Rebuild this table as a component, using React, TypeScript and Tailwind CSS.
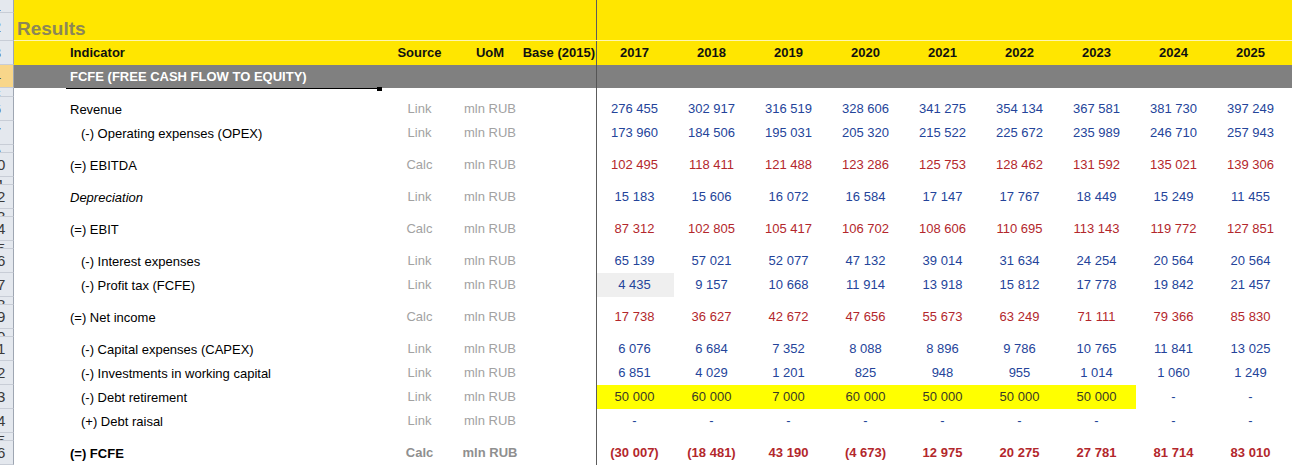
import React from "react";

type DataRow = {
  kind: "data";
  num: number;
  label: string;
  indent?: boolean;
  italic?: boolean;
  bold?: boolean;
  src: "Link" | "Calc";
  color: "blue" | "red";
  vals: string[];
  hl?: number;
  grayFirst?: boolean;
};
type SpacerRow = { kind: "spacer"; num: number };
type Row = DataRow | SpacerRow;

const years = ["2017", "2018", "2019", "2020", "2021", "2022", "2023", "2024", "2025"];
const dash = ["-", "-", "-", "-", "-", "-", "-", "-", "-"];

const rows: Row[] = [
  { kind: "data", num: 6, label: "Revenue", src: "Link", color: "blue", vals: ["276 455", "302 917", "316 519", "328 606", "341 275", "354 134", "367 581", "381 730", "397 249"] },
  { kind: "data", num: 7, label: "(-) Operating expenses (OPEX)", indent: true, src: "Link", color: "blue", vals: ["173 960", "184 506", "195 031", "205 320", "215 522", "225 672", "235 989", "246 710", "257 943"] },
  { kind: "spacer", num: 9 },
  { kind: "data", num: 10, label: "(=) EBITDA", src: "Calc", color: "red", vals: ["102 495", "118 411", "121 488", "123 286", "125 753", "128 462", "131 592", "135 021", "139 306"] },
  { kind: "spacer", num: 11 },
  { kind: "data", num: 12, label: "Depreciation", italic: true, src: "Link", color: "blue", vals: ["15 183", "15 606", "16 072", "16 584", "17 147", "17 767", "18 449", "15 249", "11 455"] },
  { kind: "spacer", num: 13 },
  { kind: "data", num: 14, label: "(=) EBIT", src: "Calc", color: "red", vals: ["87 312", "102 805", "105 417", "106 702", "108 606", "110 695", "113 143", "119 772", "127 851"] },
  { kind: "spacer", num: 15 },
  { kind: "data", num: 16, label: "(-) Interest expenses", indent: true, src: "Link", color: "blue", vals: ["65 139", "57 021", "52 077", "47 132", "39 014", "31 634", "24 254", "20 564", "20 564"] },
  { kind: "data", num: 17, label: "(-) Profit tax (FCFE)", indent: true, src: "Link", color: "blue", grayFirst: true, vals: ["4 435", "9 157", "10 668", "11 914", "13 918", "15 812", "17 778", "19 842", "21 457"] },
  { kind: "spacer", num: 18 },
  { kind: "data", num: 19, label: "(=) Net income", src: "Calc", color: "red", vals: ["17 738", "36 627", "42 672", "47 656", "55 673", "63 249", "71 111", "79 366", "85 830"] },
  { kind: "spacer", num: 20 },
  { kind: "data", num: 21, label: "(-) Capital expenses (CAPEX)", indent: true, src: "Link", color: "blue", vals: ["6 076", "6 684", "7 352", "8 088", "8 896", "9 786", "10 765", "11 841", "13 025"] },
  { kind: "data", num: 22, label: "(-) Investments in working capital", indent: true, src: "Link", color: "blue", vals: ["6 851", "4 029", "1 201", "825", "948", "955", "1 014", "1 060", "1 249"] },
  { kind: "data", num: 23, label: "(-) Debt retirement", indent: true, src: "Link", color: "blue", hl: 7, vals: ["50 000", "60 000", "7 000", "60 000", "50 000", "50 000", "50 000", "-", "-"] },
  { kind: "data", num: 24, label: "(+) Debt raisal", indent: true, src: "Link", color: "blue", vals: dash },
  { kind: "spacer", num: 25 },
  { kind: "data", num: 26, label: "(=) FCFE", bold: true, src: "Calc", color: "red", vals: ["(30 007)", "(18 481)", "43 190", "(4 673)", "12 975", "20 275", "27 781", "81 714", "83 010"] },
];

function Strip({ num, selected, top }: { num: number; selected?: boolean; top?: boolean }) {
  return (
    <div
      className={`flex shrink-0 w-[14px] overflow-hidden border-r border-b border-r-[#9ea6b2] border-b-[#c8cdd6] ${
        selected ? "bg-[#f8d68a]" : "bg-[#e4e8ee]"
      } ${top ? "items-start" : "items-center"}`}
    >
      <div className="w-[26px] -ml-[16px] shrink-0 flex justify-center text-[15px] leading-[16px] text-[#3b3b3b]">
        {num}
      </div>
    </div>
  );
}

function Divider() {
  return <div className="w-px shrink-0 bg-[#5c5c5c]" />;
}

export default function App() {
  return (
    <div className="w-[1292px] h-[465px] overflow-hidden bg-white font-['Liberation_Sans','Arial',sans-serif] text-[13px] text-black">
      {/* Row 1 */}
      <div className="flex h-[13px]">
        <Strip num={1} />
        <div className="flex flex-1 bg-[#ffe600]">
          <div className="w-[582px] shrink-0" />
          <Divider />
          <div className="flex-1" />
        </div>
      </div>
      {/* Row 2: Results */}
      <div className="flex h-[28px]">
        <Strip num={2} />
        <div className="flex flex-1 bg-[#ffe600] border-b border-b-[#fff6b0]">
          <div className="w-[582px] shrink-0 flex items-center pl-[3px] pt-[4px] text-[19px] font-bold text-[#8c8757] leading-none">
            Results
          </div>
          <Divider />
          <div className="flex-1" />
        </div>
      </div>
      {/* Row 3: headers */}
      <div className="flex h-[24px]">
        <Strip num={3} />
        <div className="flex flex-1 bg-[#ffe600] font-bold text-[#111]">
          <div className="w-[52px] shrink-0" />
          <div className="w-[314px] shrink-0 flex items-center pl-[4px]">Indicator</div>
          <div className="w-[79px] shrink-0 flex items-center justify-center">Source</div>
          <div className="w-[62px] shrink-0 flex items-center justify-center">UoM</div>
          <div className="w-[75px] shrink-0 flex items-center justify-end pr-[1px] whitespace-nowrap">Base (2015)</div>
          <Divider />
          {years.map((y) => (
            <div key={y} className="w-[77px] shrink-0 flex items-center justify-center pr-[2px]">
              {y}
            </div>
          ))}
        </div>
      </div>
      {/* Row 4: section */}
      <div className="flex h-[23px]">
        <Strip num={4} selected />
        <div className="flex flex-1 bg-[#808080] font-bold text-white">
          <div className="w-[52px] shrink-0" />
          <div className="w-[530px] shrink-0 flex items-center pl-[4px]">FCFE (FREE CASH FLOW TO EQUITY)</div>
          <div className="w-px shrink-0 bg-[#555]" />
          <div className="flex-1" />
        </div>
      </div>
      {/* Row 5: small */}
      <div className="flex h-[9px]">
        <Strip num={5} top />
        <div className="flex flex-1">
          <div className="w-[52px] shrink-0" />
          <div className="w-[314px] shrink-0 relative border-t border-t-black">
            <div className="absolute right-[-2px] top-[-2px] w-[5px] h-[4px] bg-black" />
          </div>
          <div className="w-[216px] shrink-0" />
          <Divider />
          <div className="flex-1" />
        </div>
      </div>
      {rows.map((r, i) => {
        if (r.kind === "spacer") {
          return (
            <div key={i} className="flex h-[8px]">
              <Strip num={r.num} top />
              <div className="flex flex-1">
                <div className="w-[582px] shrink-0" />
                <Divider />
                <div className="flex-1" />
              </div>
            </div>
          );
        }
        const colorCls = r.color === "red" ? "text-[#b3272c]" : "text-[#24449a]";
        return (
          <div key={i} className="flex h-[24px]">
            <Strip num={r.num} />
            <div className="flex flex-1">
              <div className="w-[52px] shrink-0" />
              <div
                className={`w-[314px] shrink-0 flex items-center pt-[1px] ${r.indent ? "pl-[15px]" : "pl-[4px]"} ${
                  r.italic ? "italic" : ""
                } ${r.bold ? "font-bold" : ""}`}
              >
                {r.label}
              </div>
              <div
                className={`w-[79px] shrink-0 flex items-center justify-center ${
                  r.bold ? "font-bold text-[#8f8f8f]" : "text-[#a2a2a2]"
                }`}
              >
                {r.src}
              </div>
              <div
                className={`w-[62px] shrink-0 flex items-center justify-center ${
                  r.bold ? "font-bold text-[#8f8f8f]" : "text-[#a2a2a2]"
                }`}
              >
                mln RUB
              </div>
              <div className="w-[75px] shrink-0" />
              <Divider />
              {r.vals.map((v, j) => {
                const hl = r.hl !== undefined && j < r.hl;
                const gray = r.grayFirst && j === 0;
                return (
                  <div
                    key={j}
                    className={`w-[77px] shrink-0 flex items-center justify-center pr-[2px] ${
                      hl ? "bg-[#ffff00] text-[#3a3a26]" : colorCls
                    } ${gray ? "bg-[#efefef]" : ""} ${r.bold ? "font-bold" : ""}`}
                  >
                    {v}
                  </div>
                );
              })}
            </div>
          </div>
        );
      })}
    </div>
  );
}
